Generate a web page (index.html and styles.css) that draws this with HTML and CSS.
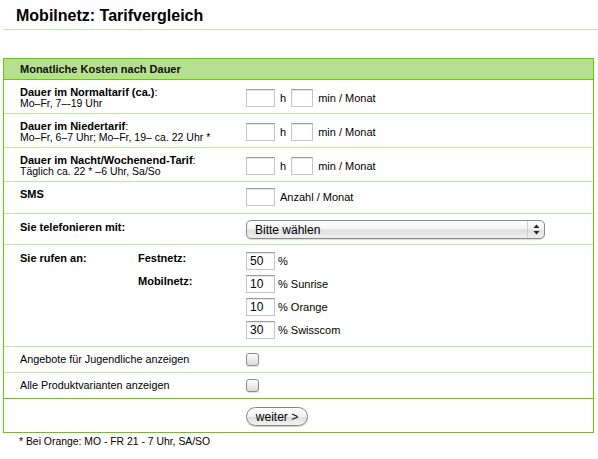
FILE: index.html
```html
<!DOCTYPE html>
<html lang="de">
<head>
<meta charset="utf-8">
<title>Mobilnetz: Tarifvergleich</title>
<link rel="stylesheet" href="styles.css">
</head>
<body>
<h1 class="page-title">Mobilnetz: Tarifvergleich</h1>
<form class="calc">
  <div class="calc-head">Monatliche Kosten nach Dauer</div>

  <div class="row row-dur">
    <div class="label">
      <div class="label-main"><b>Dauer im Normaltarif (ca.)</b>:</div>
      <div class="label-sub">Mo–Fr, 7–-19 Uhr</div>
    </div>
    <div class="field"><input class="inp inp-h" type="text"><span class="unit">h</span><input class="inp inp-m" type="text"><span class="unit">min / Monat</span></div>
  </div>

  <div class="row row-dur">
    <div class="label">
      <div class="label-main"><b>Dauer im Niedertarif</b>:</div>
      <div class="label-sub">Mo–Fr, 6–7 Uhr; Mo–Fr, 19– ca. 22 Uhr *</div>
    </div>
    <div class="field"><input class="inp inp-h" type="text"><span class="unit">h</span><input class="inp inp-m" type="text"><span class="unit">min / Monat</span></div>
  </div>

  <div class="row row-dur">
    <div class="label">
      <div class="label-main"><b>Dauer im Nacht/Wochenend-Tarif</b>:</div>
      <div class="label-sub">Täglich ca. 22 * –6 Uhr, Sa/So</div>
    </div>
    <div class="field"><input class="inp inp-h" type="text"><span class="unit">h</span><input class="inp inp-m" type="text"><span class="unit">min / Monat</span></div>
  </div>

  <div class="row row-sms">
    <div class="label"><b>SMS</b></div>
    <div class="field"><input class="inp inp-h" type="text"><span class="unit">Anzahl / Monat</span></div>
  </div>

  <div class="row row-select">
    <div class="label"><b>Sie telefonieren mit:</b></div>
    <div class="field">
      <div class="select">
        <select class="select-input"><option>Bitte wählen</option></select>
        <span class="select-arrows"><svg width="7" height="11" viewBox="0 0 7 11"><path d="M3.5 0.5 L6.5 4 L0.5 4 Z" fill="#222"/><path d="M0.5 7 L6.5 7 L3.5 10.5 Z" fill="#222"/></svg></span>
      </div>
    </div>
  </div>

  <div class="row row-call">
    <div class="label"><b>Sie rufen an:</b></div>
    <div class="label"><b>Festnetz:</b></div>
    <div class="call-field"><input class="inp inp-h" type="text" value="50"><span class="pct">%</span></div>
    <div class="label call-sub"><b>Mobilnetz:</b></div>
    <div class="call-field"><input class="inp inp-h" type="text" value="10"><span class="pct">% Sunrise</span></div>
    <div class="call-field"><input class="inp inp-h" type="text" value="10"><span class="pct">% Orange</span></div>
    <div class="call-field"><input class="inp inp-h" type="text" value="30"><span class="pct">% Swisscom</span></div>
  </div>

  <div class="row row-check">
    <div class="label">Angebote für Jugendliche anzeigen</div>
    <div class="check-cell"><input class="check" type="checkbox"></div>
  </div>

  <div class="row row-check row-last">
    <div class="label">Alle Produktvarianten anzeigen</div>
    <div class="check-cell"><input class="check" type="checkbox"></div>
  </div>

  <div class="row row-submit">
    <div class="field"><button class="btn" type="button">weiter &gt;</button></div>
  </div>
</form>
<p class="note">* Bei Orange: MO - FR 21 - 7 Uhr, SA/SO</p>
</body>
</html>
```

FILE: styles.css
```css
* { box-sizing: border-box; }

body {
  margin: 0;
  width: 598px;
  background: #fff;
  color: #000;
  font-family: "Liberation Sans", Arial, Helvetica, sans-serif;
}

.page-title {
  margin: 0 0 0 3px;
  padding: 7px 0 4px 13px;
  font-size: 16px;
  line-height: 18px;
  font-weight: bold;
  color: #000;
  border-bottom: 1px solid #c9e8ac;
}

.calc {
  margin: 28px 0 0 3px;
  width: 591px;
  border: 1px solid #66cc00;
}

.calc-head {
  height: 21px;
  line-height: 20px;
  padding-left: 16px;
  background: #b6e08f;
  border-bottom: 1px solid #66cc00;
  font-size: 11px;
  font-weight: bold;
  color: #111;
}

.row {
  display: grid;
  grid-template-columns: 226px 1fr;
  padding: 6px 0 4px 16px;
  border-bottom: 1px solid #bee89c;
  font-size: 11px;
}

.label {
  line-height: 12px;
  align-self: start;
}

.label-main { line-height: 12px; }

.label-sub {
  font-size: 10.5px;
  line-height: 11px;
}

.field {
  display: flex;
  align-items: center;
  align-self: center;
  grid-column: 2;
}

.inp {
  height: 18px;
  margin: 0;
  padding: 0 3px;
  border: 1px solid #c6c6c6;
  border-top-color: #9c9c9c;
  background: #fff;
  box-shadow: inset 0 1px 1px rgba(0, 0, 0, 0.1);
  font: 12px "Liberation Sans", Arial, sans-serif;
  color: #000;
}

.inp-h { width: 29px; }
.inp-m { width: 22px; }

.unit { margin: 0 5px; }

.row-sms { padding: 6px 0 7px 16px; }

.row-select { padding: 6px 0 5px 16px; }
.row-select .label { padding-top: 1px; }

.select {
  display: flex;
  width: 299px;
  height: 19px;
  border: 1px solid #8a8a8a;
  border-radius: 5px;
  background: linear-gradient(#ffffff, #f4f4f4 45%, #e0e0e0 55%, #efefef);
  box-shadow: 0 1px 1px rgba(0, 0, 0, 0.15);
  overflow: hidden;
}

.select-input {
  flex: 1;
  height: 100%;
  margin: 0;
  padding: 0 0 0 8px;
  border: 0;
  background: transparent;
  -webkit-appearance: none;
  appearance: none;
  font: 12px "Liberation Sans", Arial, sans-serif;
  color: #000;
}

.select-arrows {
  width: 17px;
  display: flex;
  align-items: center;
  justify-content: center;
  border-left: 1px solid #cfcfcf;
}

.row-call {
  grid-template-columns: 118px 108px 1fr;
  grid-auto-rows: 18px;
  row-gap: 5px;
  padding: 7px 0 7px 16px;
}

.call-sub { grid-column: 2; }

.call-field {
  grid-column: 3;
  display: flex;
  align-items: center;
}

.pct { margin-left: 3px; }

.row-check {
  padding: 6px 0 6px 16px;
}

.row-check .label { font-size: 10.8px; }

.check-cell { display: flex; }

.check {
  -webkit-appearance: none;
  appearance: none;
  width: 13px;
  height: 13px;
  margin: 0;
  border: 1px solid #8c8c8c;
  border-radius: 3px;
  background: linear-gradient(#fdfdfd, #dcdcdc);
  box-shadow: 0 1px 1px rgba(0, 0, 0, 0.12);
}

.row-last { border-bottom-color: #66cc00; }

.row-submit {
  padding: 8px 0 6px 16px;
  border-bottom: 0;
}

.btn {
  width: 62px;
  height: 19px;
  margin: 0;
  padding: 0;
  border: 1px solid #858585;
  border-radius: 10px;
  background: linear-gradient(#ffffff, #f1f1f1 50%, #dcdcdc 51%, #f3f3f3);
  box-shadow: 0 1px 1px rgba(0, 0, 0, 0.2);
  font: 12px "Liberation Sans", Arial, sans-serif;
  color: #000;
}

.note {
  margin: 3px 0 0;
  padding-left: 19px;
  font-size: 10.4px;
  line-height: 12px;
}
```
